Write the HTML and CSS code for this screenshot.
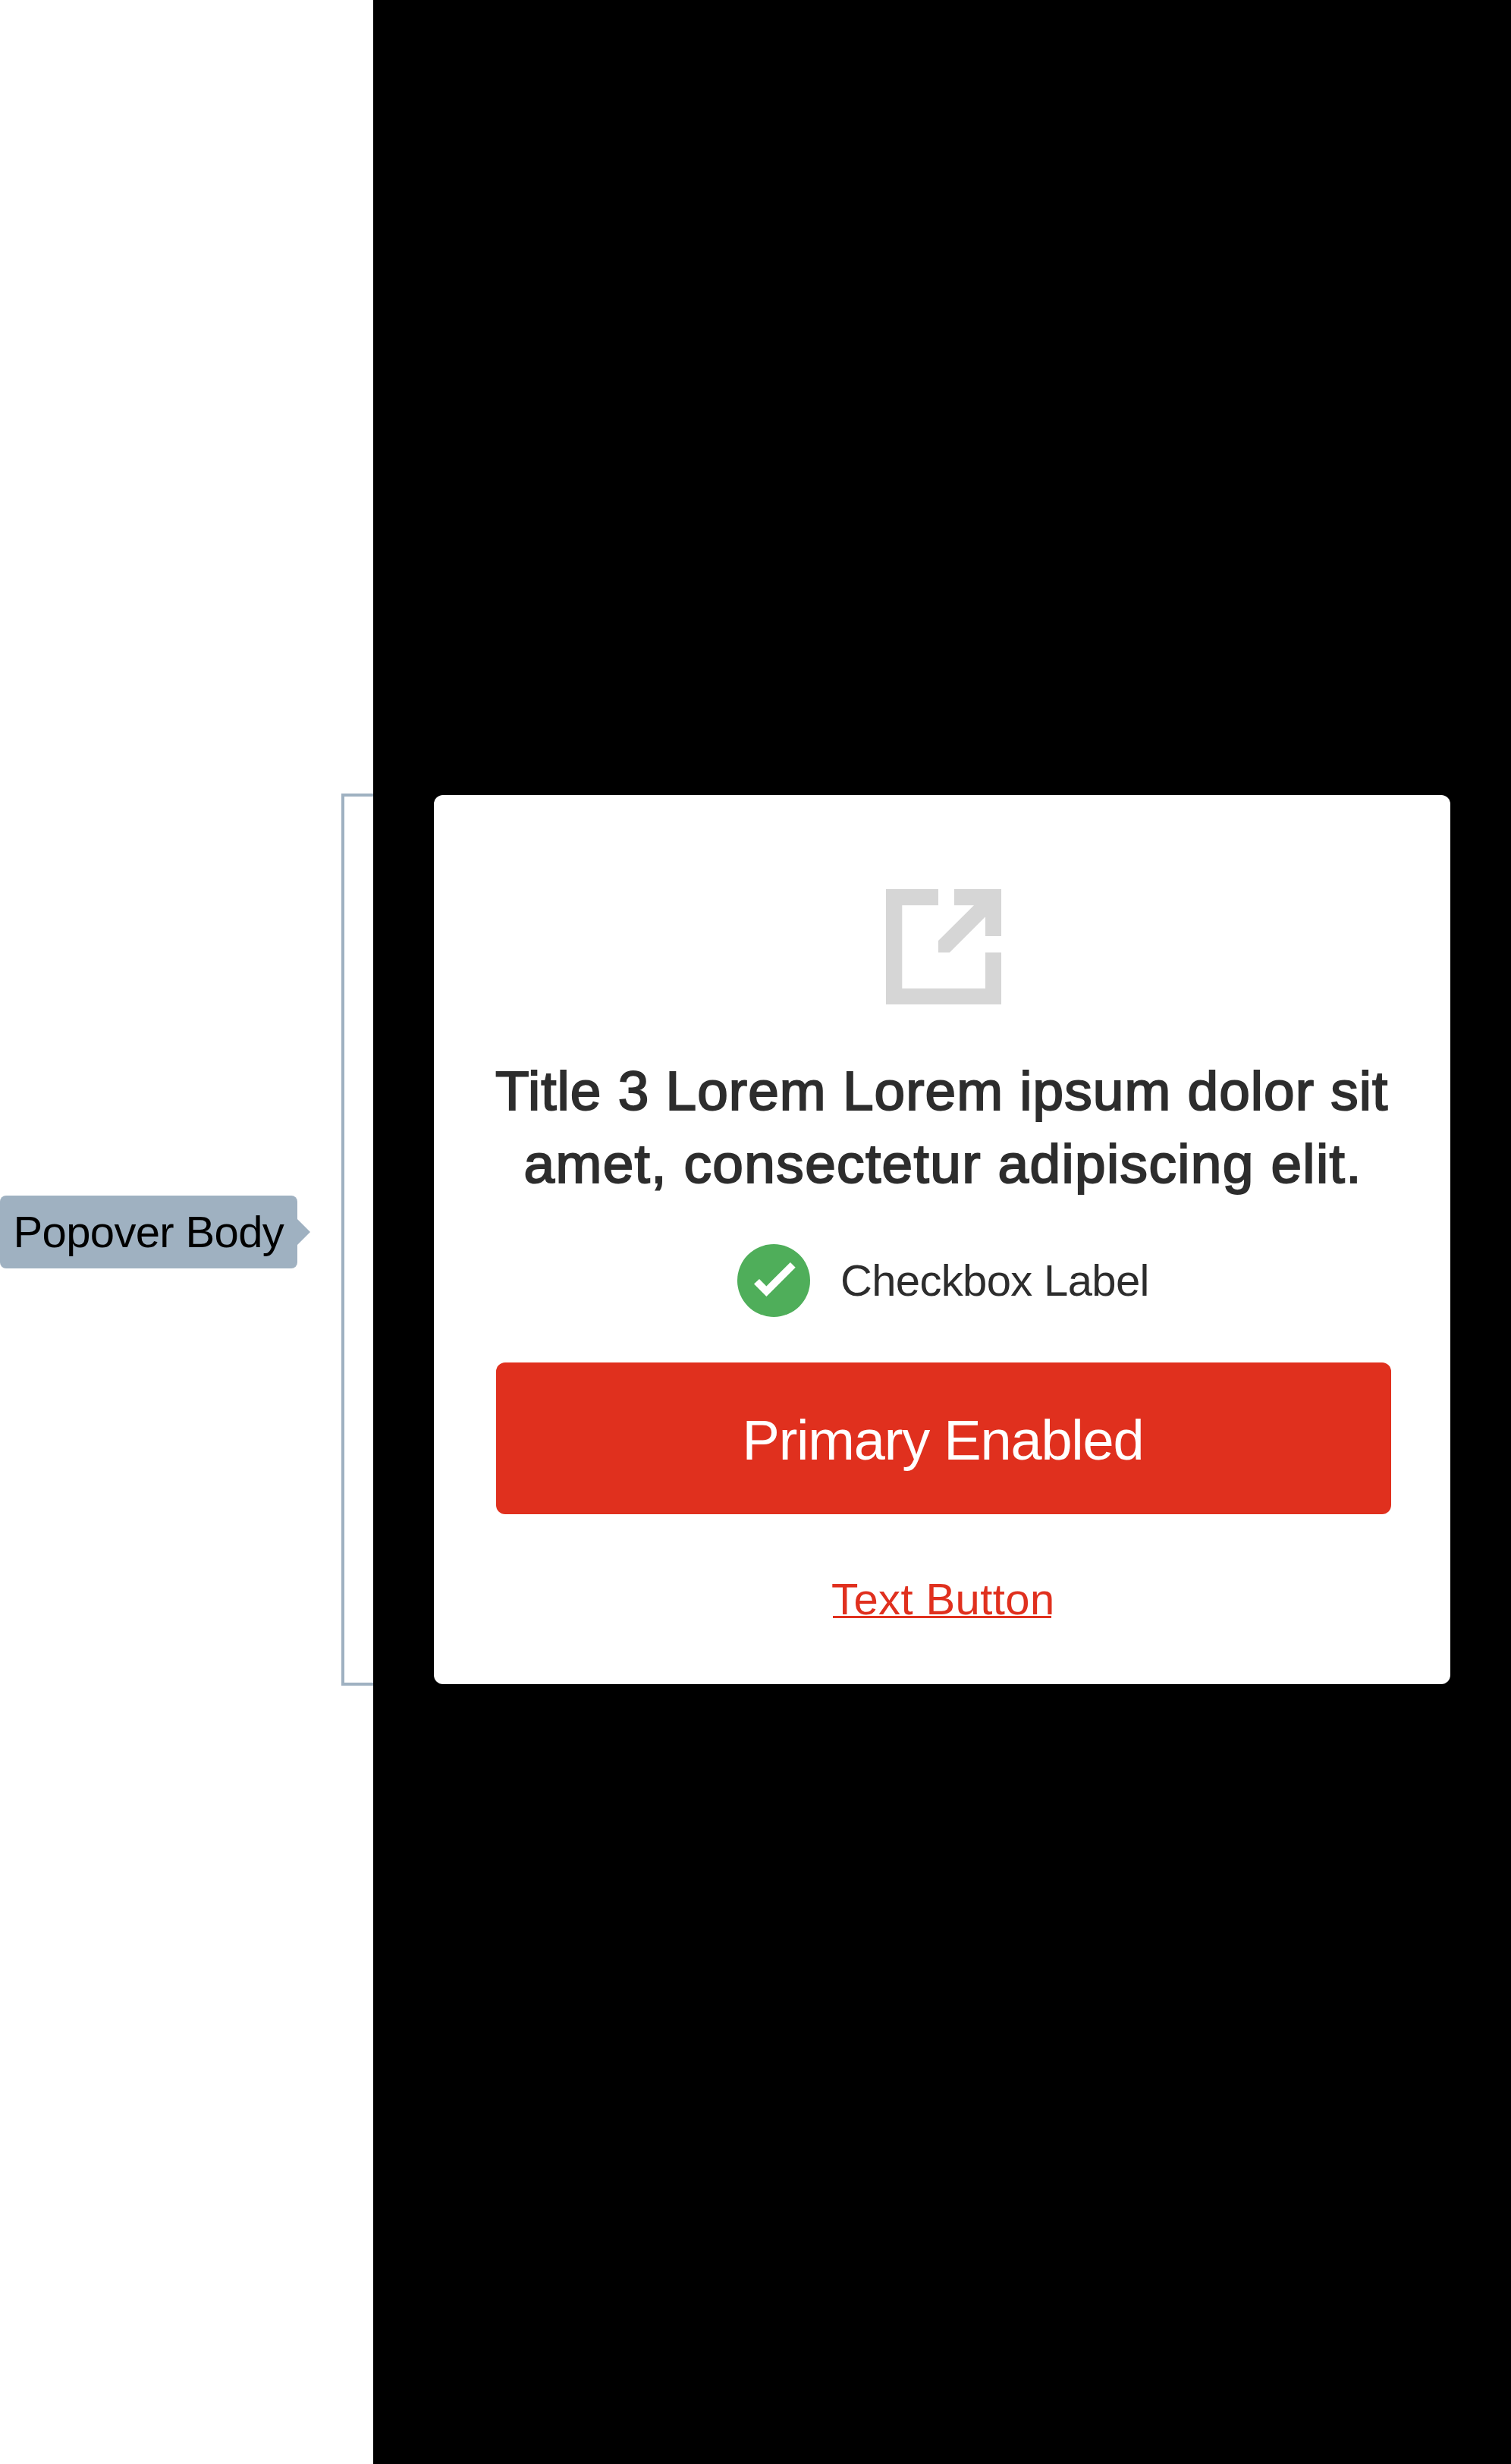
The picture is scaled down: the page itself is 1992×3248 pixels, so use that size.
FILE: index.html
```html
<!DOCTYPE html>
<html lang="en">
<head>
<meta charset="utf-8">
<title>Popover Body</title>
<link rel="stylesheet" href="styles.css">
</head>
<body>
<div class="page">
  <aside class="notes">
    <div class="note">Popover Body</div>
    <svg class="note-arrow" width="17" height="34" viewBox="0 0 17 34" aria-hidden="true"><path d="M0 0L17 17L0 34Z" fill="currentColor"/></svg>
    <div class="bracket"></div>
  </aside>
  <main class="overlay">
    <section class="popover">
      <svg class="popover-icon" width="152" height="152" viewBox="0 0 152 152" aria-hidden="true">
        <path fill="currentColor" d="M0 0H69V21.3H21.3V131H131V83.4H152V152H0ZM90 0H152V62H131V36.5L84 83.4H69V68L116 21.3H90Z"/>
      </svg>
      <h1 class="title"><span class="title-first">Title 3 Lorem Lorem ipsum dolor sit</span> <span class="title-second">amet, consectetur adipiscing elit.</span></h1>
      <div class="check">
        <svg width="96" height="96" viewBox="0 0 96 96" aria-hidden="true">
          <circle cx="48" cy="48" r="48" fill="#4fae5a"/>
          <path d="M69.9 24L76.7 30.8L38.4 69L22 52.6L29 46L38.4 55.4Z" fill="#fff"/>
        </svg>
        <span class="check-label">Checkbox Label</span>
      </div>
      <button class="primary" type="button">Primary Enabled</button>
      <a class="text-button">Text Button</a>
    </section>
  </main>
</div>
</body>
</html>
```
FILE: styles.css
```css
* { box-sizing: border-box; }

body {
  margin: 0;
  background: #fff;
  font-family: "Liberation Sans", Arial, sans-serif;
}

.page {
  display: grid;
  grid-template-columns: 492px 1500px;
  height: 3248px;
}

/* Annotation gutter */
.notes {
  display: flex;
  align-items: flex-start;
  padding-top: 1046px;
  color: #9fb1c1;
}

.note {
  width: 392px;
  height: 96px;
  margin-top: 530px;
  padding-left: 17.5px;
  border-radius: 8px;
  background: #9fb1c1;
  color: #000;
  font-size: 58px;
  line-height: 95px;
  letter-spacing: -0.64px;
  white-space: nowrap;
}

.note-arrow {
  flex: none;
  margin-top: 561px;
}

.bracket {
  width: 42px;
  height: 1176px;
  margin-left: 41px;
  border: 4px solid #9fb1c1;
  border-right: 0;
}

/* Dark backdrop and the popover on it */
.overlay {
  background: #000;
  padding: 1048px 80px 0;
}

.popover {
  display: flex;
  flex-direction: column;
  align-items: flex-start;
  width: 1340px;
  height: 1172px;
  padding: 124px 78px 0 80px;
  border-radius: 12px;
  background: #fff;
  color: #2d2d2d;
}

.popover-icon {
  flex: none;
  margin-left: 516px;
  color: #d6d6d6;
}

.title {
  display: flex;
  flex-direction: column;
  margin: 66px 0 58px;
  font-size: 73px;
  font-weight: 400;
  line-height: 96px;
  white-space: nowrap;
  -webkit-text-stroke: 2px #2d2d2d;
}

.title-first {
  padding-left: 1px;
  letter-spacing: 1.03px;
}

.title-second {
  padding-left: 38.5px;
  letter-spacing: 1.36px;
}

.check {
  display: flex;
  gap: 40px;
  height: 96px;
  margin-left: 320px;
}

.check-label {
  font-size: 58px;
  line-height: 95px;
  letter-spacing: -0.66px;
  white-space: nowrap;
}

.primary {
  width: 1180px;
  height: 200px;
  margin: 60px 0 79px 2px;
  padding: 4px 0 0 324.5px;
  border: 0;
  border-radius: 12px;
  background: #e0301e;
  color: #fff;
  font: 74px "Liberation Sans", Arial, sans-serif;
  letter-spacing: -1.2px;
  text-align: left;
  white-space: nowrap;
}

.text-button {
  margin-left: 444px;
  color: #e0301e;
  font-size: 58px;
  line-height: 65px;
  letter-spacing: 0.4px;
  white-space: nowrap;
}

.text-button::after {
  content: "";
  display: block;
  width: 288px;
  height: 3px;
  margin: -10px 0 0 2px;
  background: #e0301e;
}
```
